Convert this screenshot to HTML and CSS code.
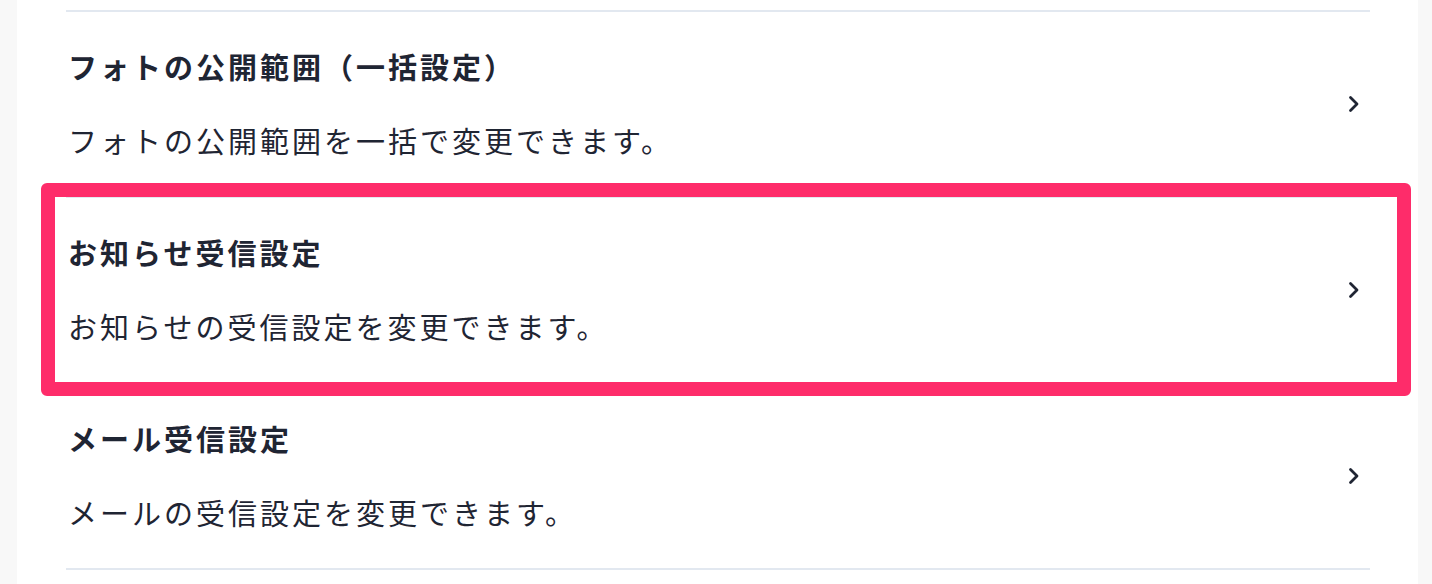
FILE: index.html
```html
<!DOCTYPE html>
<html lang="ja">
<head>
<meta charset="utf-8">
<title>設定</title>
<link rel="stylesheet" href="styles.css">
</head>
<body>
<div class="panel">
  <ul class="list">
    <li class="row">
      <div class="texts">
        <div class="title">フォトの公開範囲（一括設定）</div>
        <div class="desc">フォトの公開範囲を一括で変更できます。</div>
      </div>
      <svg class="chev" width="12" height="18" viewBox="0 0 12 18"><path d="M2.5 2.5 L9 9 L2.5 15.5" fill="none" stroke="#1f2533" stroke-width="2.8" stroke-linecap="round" stroke-linejoin="round"/></svg>
    </li>
    <li class="row">
      <div class="texts">
        <div class="title">お知らせ受信設定</div>
        <div class="desc">お知らせの受信設定を変更できます。</div>
      </div>
      <svg class="chev" width="12" height="18" viewBox="0 0 12 18"><path d="M2.5 2.5 L9 9 L2.5 15.5" fill="none" stroke="#1f2533" stroke-width="2.8" stroke-linecap="round" stroke-linejoin="round"/></svg>
    </li>
    <li class="row last">
      <div class="texts">
        <div class="title">メール受信設定</div>
        <div class="desc">メールの受信設定を変更できます。</div>
      </div>
      <svg class="chev" width="12" height="18" viewBox="0 0 12 18"><path d="M2.5 2.5 L9 9 L2.5 15.5" fill="none" stroke="#1f2533" stroke-width="2.8" stroke-linecap="round" stroke-linejoin="round"/></svg>
    </li>
  </ul>
</div>
<div class="highlight"></div>
</body>
</html>
```
FILE: styles.css
```css
html, body {
  margin: 0;
  padding: 0;
}
body {
  background: #f8f8f8;
  font-family: "Noto Sans CJK JP", "Noto Sans", sans-serif;
  color: #1f2533;
  height: 584px;
  overflow: hidden;
  position: relative;
}
.panel {
  background: #ffffff;
  margin: 0 14px 0 17px;
  padding: 10px 48px 0 49px;
  height: 574px;
}
.list {
  list-style: none;
  margin: 0;
  padding: 0;
}
.row {
  display: flex;
  align-items: center;
  justify-content: space-between;
  border-top: 2px solid #e2e8f0;
  height: 184px;
  padding: 0 10px 0 2px;
}
.row.last {
  border-bottom: 2px solid #e2e8f0;
}
.texts {
  display: flex;
  flex-direction: column;
  gap: 34px;
  margin-top: -3px;
}
.title {
  font-size: 29px;
  font-weight: 700;
  line-height: 40px;
  letter-spacing: 3px;
}
.desc {
  font-size: 29px;
  font-weight: 400;
  line-height: 40px;
  letter-spacing: 3px;
}
.chev {
  display: block;
  flex: none;
}
.highlight {
  position: absolute;
  left: 41px;
  top: 183px;
  width: 1370px;
  height: 213px;
  box-sizing: border-box;
  border: 14px solid #fe2c6a;
  border-radius: 6px;
}
```
